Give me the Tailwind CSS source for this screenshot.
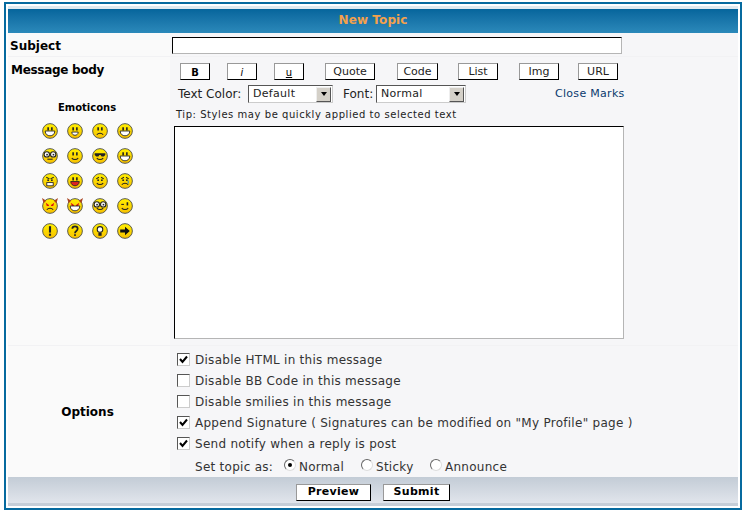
<!DOCTYPE html>
<html lang="en">
<head>
  <meta charset="UTF-8">
  <title>New Topic</title>
  <script src="https://cdn.jsdelivr.net/npm/@tailwindcss/browser@4"></script>
</head>
<body class="bg-white w-[747px] h-[516px] overflow-hidden font-['DejaVu_Sans',Verdana,sans-serif] text-[11px] text-[#222]">
  <svg width="0" height="0" class="absolute"><defs><linearGradient id="face" x1="0" y1="0" x2="0" y2="1"><stop offset="0" stop-color="#fff000"/><stop offset="1" stop-color="#f8c000"/></linearGradient></defs></svg>
  <div class="ml-[4px] mt-[2px] w-[738px] h-[508px] border-2 border-[#066a9f] p-[2px] flex flex-col">

    <!-- title -->
    <div class="h-[27px] shrink-0 border-t-[3px] border-t-[#dfeaf1] bg-gradient-to-b from-[#05659c] to-[#2b89ba] flex items-center justify-center font-bold text-[12px] text-[#f4a14c] tracking-[0.1px] pb-[2px]">New Topic</div>

    <!-- subject -->
    <div class="h-[24px] shrink-0 flex border-b border-[#f2f2f4]">
      <div class="w-[162px] bg-[#fafafa] pl-[2px] pt-[4px] font-bold text-[12px] text-black">Subject</div>
      <div class="flex-1 bg-[#f6f6f8] pl-[2px] pt-[4px]">
        <div class="w-[450px] h-[17px] bg-white border border-t-black border-l-black border-r-[#b5b5b5] border-b-[#b5b5b5]"></div>
      </div>
    </div>

    <!-- message body -->
    <div class="h-[289px] shrink-0 flex border-b border-[#f2f2f4]">
      <div class="w-[162px] bg-[#fafafa]">
        <div class="pl-[3px] pt-[4px] font-bold text-[12px] tracking-[-0.3px] text-black">Message body</div>
        <div class="w-[100px] ml-[29px] mt-[21px]">
          <div class="text-center font-bold text-[10px] text-black">Emoticons</div>
          <div id="smileys" class="grid grid-cols-4 mt-[3px]"></div>
        </div>
      </div>
      <div class="flex-1 bg-[#f6f6f8]">
        <div class="flex pt-[6px] pl-[10px] h-[27px]">
          <div class="w-[30px] h-[17px] pt-[1px] bg-white border border-t-[#999] border-l-[#999] border-r-black border-b-black flex items-center justify-center font-bold text-[10px] text-black">B</div>
          <div class="ml-[17px] w-[30px] h-[17px] pt-[1px] bg-white border border-t-[#999] border-l-[#999] border-r-black border-b-black flex items-center justify-center italic text-[10px] text-black">i</div>
          <div class="ml-[17px] w-[30px] h-[17px] pt-[1px] bg-white border border-t-[#999] border-l-[#999] border-r-black border-b-black flex items-center justify-center underline text-[10px] text-black">u</div>
          <div class="ml-[21px] w-[50px] h-[17px] pt-[1px] bg-white border border-t-[#999] border-l-[#999] border-r-black border-b-black flex items-center justify-center text-[11px]">Quote</div>
          <div class="ml-[22px] w-[41px] h-[17px] pt-[1px] bg-white border border-t-[#999] border-l-[#999] border-r-black border-b-black flex items-center justify-center text-[11px]">Code</div>
          <div class="ml-[20px] w-[40px] h-[17px] pt-[1px] bg-white border border-t-[#999] border-l-[#999] border-r-black border-b-black flex items-center justify-center text-[11px]">List</div>
          <div class="ml-[21px] w-[40px] h-[17px] pt-[1px] bg-white border border-t-[#999] border-l-[#999] border-r-black border-b-black flex items-center justify-center text-[11px]">Img</div>
          <div class="ml-[19px] w-[40px] h-[17px] pt-[1px] bg-white border border-t-[#999] border-l-[#999] border-r-black border-b-black flex items-center justify-center text-[11px]">URL</div>
        </div>
        <div class="flex items-center pl-[8px] h-[20px] text-[12px]">
          <span class="w-[70px]">Text Color:</span>
          <div class="w-[85px] h-[18px] bg-white border border-t-[#555] border-l-[#555] border-r-[#ccc] border-b-[#ccc] flex items-center pl-[4px] justify-between text-[11px] tracking-[0.3px]">
            <span>Default</span>
            <span class="w-[15px] h-[15px] mr-[1px] bg-[#d4d0c8] border border-t-[#eee] border-l-[#eee] border-r-[#555] border-b-[#555] flex items-center justify-center">
              <span class="w-0 h-0 border-x-[3px] border-x-transparent border-t-[4px] border-t-black"></span>
            </span>
          </div>
          <span class="ml-[10px] w-[33px]">Font:</span>
          <div class="w-[90px] h-[18px] bg-white border border-t-[#555] border-l-[#555] border-r-[#ccc] border-b-[#ccc] flex items-center pl-[4px] justify-between text-[11px] tracking-[0.3px]">
            <span>Normal</span>
            <span class="w-[15px] h-[15px] mr-[1px] bg-[#d4d0c8] border border-t-[#eee] border-l-[#eee] border-r-[#555] border-b-[#555] flex items-center justify-center">
              <span class="w-0 h-0 border-x-[3px] border-x-transparent border-t-[4px] border-t-black"></span>
            </span>
          </div>
          <a class="ml-[89px] pt-[1px] text-[11px] tracking-[0.3px] text-[#0a3a6e]">Close Marks</a>
        </div>
        <div class="pl-[6px] pt-[4px] h-[21px] text-[10px] tracking-[0.55px] leading-[13px]">Tip: Styles may be quickly applied to selected text</div>
        <div class="ml-[4px] mt-[1px] w-[450px] h-[213px] bg-white border border-t-black border-l-black border-r-[#b5b5b5] border-b-[#b5b5b5]"></div>
      </div>
    </div>

    <!-- options -->
    <div class="h-[131px] shrink-0 flex">
      <div class="w-[162px] bg-[#fafafa] flex items-center justify-center font-bold text-[12px] text-black pr-[3px]">Options</div>
      <div class="flex-1 bg-[#f6f6f8] pl-[7px] pt-[3px] text-[12px] tracking-[0.27px] text-[#333]">
        <div class="flex items-center h-[21px]"><span class="w-[13px] h-[13px] bg-white border border-t-[#555] border-l-[#555] border-r-[#ccc] border-b-[#ccc] flex items-center justify-center"><svg width="9" height="9" viewBox="0 0 9 9"><path d="M1 4l2.500 3L8 1.500" fill="none" stroke="#000" stroke-width="2"/></svg></span><span class="ml-[5px]">Disable HTML in this message</span></div>
        <div class="flex items-center h-[21px]"><span class="w-[13px] h-[13px] bg-white border border-t-[#555] border-l-[#555] border-r-[#ccc] border-b-[#ccc]"></span><span class="ml-[5px]">Disable BB Code in this message</span></div>
        <div class="flex items-center h-[21px]"><span class="w-[13px] h-[13px] bg-white border border-t-[#555] border-l-[#555] border-r-[#ccc] border-b-[#ccc]"></span><span class="ml-[5px]">Disable smilies in this message</span></div>
        <div class="flex items-center h-[21px]"><span class="w-[13px] h-[13px] bg-white border border-t-[#555] border-l-[#555] border-r-[#ccc] border-b-[#ccc] flex items-center justify-center"><svg width="9" height="9" viewBox="0 0 9 9"><path d="M1 4l2.500 3L8 1.500" fill="none" stroke="#000" stroke-width="2"/></svg></span><span class="ml-[5px]">Append Signature ( Signatures can be modified on "My Profile" page )</span></div>
        <div class="flex items-center h-[21px]"><span class="w-[13px] h-[13px] bg-white border border-t-[#555] border-l-[#555] border-r-[#ccc] border-b-[#ccc] flex items-center justify-center"><svg width="9" height="9" viewBox="0 0 9 9"><path d="M1 4l2.500 3L8 1.500" fill="none" stroke="#000" stroke-width="2"/></svg></span><span class="ml-[5px]">Send notify when a reply is post</span></div>
        <div class="flex items-center h-[23px] pl-[18px] pt-[2px]">
          <span class="w-[89px]">Set topic as:</span>
          <span class="w-[12px] h-[12px] -mt-[4px] rounded-full bg-white border border-t-[#666] border-l-[#666] border-r-[#ddd] border-b-[#ddd] flex items-center justify-center"><span class="w-[4px] h-[4px] rounded-full bg-black"></span></span>
          <span class="ml-[3px] w-[62px]">Normal</span>
          <span class="w-[12px] h-[12px] -mt-[4px] rounded-full bg-white border border-t-[#666] border-l-[#666] border-r-[#ddd] border-b-[#ddd]"></span>
          <span class="ml-[3px] w-[54px]">Sticky</span>
          <span class="w-[12px] h-[12px] -mt-[4px] rounded-full bg-white border border-t-[#666] border-l-[#666] border-r-[#ddd] border-b-[#ddd]"></span>
          <span class="ml-[3px]">Announce</span>
        </div>
      </div>
    </div>

    <!-- buttons -->
    <div class="h-[29px] shrink-0 bg-gradient-to-b from-[#c3ccd6] to-[#e1e5ec] border-b-[3px] border-b-[#c6ced8] flex items-center pl-[288px] pt-[4px] gap-[12px]">
      <div class="w-[75px] h-[17px] bg-white border border-t-[#999] border-l-[#999] border-r-black border-b-black flex items-center justify-center font-bold text-[11px] tracking-[0.3px] text-black">Preview</div>
      <div class="w-[67px] h-[17px] bg-white border border-t-[#999] border-l-[#999] border-r-black border-b-black flex items-center justify-center font-bold text-[11px] tracking-[0.3px] text-black">Submit</div>
    </div>
  </div>

  <script>
    // face details for each emoticon, drawn on a 15x15 box
    const eyes = '<rect x="5" y="4" width="1.5" height="3" fill="#222"/><rect x="8.5" y="4" width="1.5" height="3" fill="#222"/>';
    const grin = '<path d="M3 7.500h9c0 3-2.200 4.500-4.500 4.500S3 10.500 3 7.500z" fill="#fff" stroke="#222" stroke-width=".8"/>';
    const teeth = '<path d="M4.500 8.500h6c0 2-1.500 3-3 3s-3-1-3-3z" fill="#fff" stroke="#222" stroke-width=".8"/>';
    const tongue = '<path d="M3.500 8h8c0 2.500-2 4-4 4s-4-1.500-4-4z" fill="#d22" stroke="#222" stroke-width=".8"/>';
    const smile = '<path d="M4.500 9.500c1.500 1.800 4.500 1.800 6 0" fill="none" stroke="#222"/>';
    const sad = '<path d="M4.500 11c1.500-1.800 4.500-1.800 6 0" fill="none" stroke="#222"/>';
    const flat = '<path d="M5 10.500h5" stroke="#222"/>';
    const wide = '<circle cx="4.500" cy="6" r="2.500" fill="#fff" stroke="#222"/><circle cx="10.500" cy="6" r="2.500" fill="#fff" stroke="#222"/><rect x="4" y="5.500" width="1.500" height="1.500" fill="#222"/><rect x="10" y="5.500" width="1.500" height="1.500" fill="#222"/>';
    const shades = '<path d="M2.500 5h10v1.500l-1.500 1.500h-2l-1-1.500h-1l-1 1.500h-2l-1.500-1.500z" fill="#222"/>';
    const brows = '<path d="M4 4l3 1.500M11 4l-3 1.500" stroke="#222"/><rect x="5" y="6" width="1.500" height="1.500" fill="#222"/><rect x="8.500" y="6" width="1.500" height="1.500" fill="#222"/>';
    const worried = '<path d="M4 5.500l2.500-1.500M11 5.500l-2.500-1.500" stroke="#222"/><rect x="5" y="6" width="1.500" height="1.500" fill="#222"/><rect x="8.500" y="6" width="1.500" height="1.500" fill="#222"/>';
    const horns = '<path d="M0 0l4 2.500-2.500 2.500zM15 0l-4 2.500 2.500 2.500z" fill="#a8431f"/>';
    const redEyes = '<path d="M3.500 4.500l3 2v1h-2zM11.500 4.500l-3 2v1h2z" fill="#d11"/>';
    const icons = [
      eyes + grin, eyes + teeth, eyes + sad, eyes + grin,
      wide + flat, eyes + smile, shades + smile, eyes + grin,
      brows + '<rect x="4.500" y="9" width="6" height="3" fill="#fff" stroke="#222" stroke-width=".8"/>', eyes + tongue, worried + smile, worried + sad + '<rect x="10" y="7" width="1" height="3" fill="#39c"/>',
      horns + redEyes + sad, horns + redEyes + grin, wide + smile, '<path d="M4 6h2.500" stroke="#222"/><rect x="9" y="4" width="1.500" height="3" fill="#222"/>' + smile,
      '<rect x="6.500" y="3" width="2" height="6" fill="#222"/><rect x="6.500" y="10" width="2" height="2" fill="#222"/>',
      '<path d="M5 5.500c0-3 5-3 5 0 0 2-2.500 2-2.500 4" fill="none" stroke="#222" stroke-width="1.600"/><rect x="6.700" y="10.500" width="1.600" height="1.600" fill="#222"/>',
      '<circle cx="7.500" cy="6" r="2.600" fill="#fff" stroke="#222"/><rect x="6" y="9" width="3" height="3" fill="#222"/>',
      '<path d="M3 6h4.500V3.500l4.500 4-4.500 4V9H3z" fill="#111"/>'
    ];
    document.getElementById('smileys').innerHTML = icons.map(d =>
      `<div class="h-[25px] flex items-center justify-center"><svg width="16" height="16" viewBox="0 0 15 15"><circle cx="7.500" cy="7.500" r="6.900" fill="url(#face)" stroke="#55554a" stroke-width=".9"/>${d}</svg></div>`
    ).join('');
  </script>
</body>
</html>
